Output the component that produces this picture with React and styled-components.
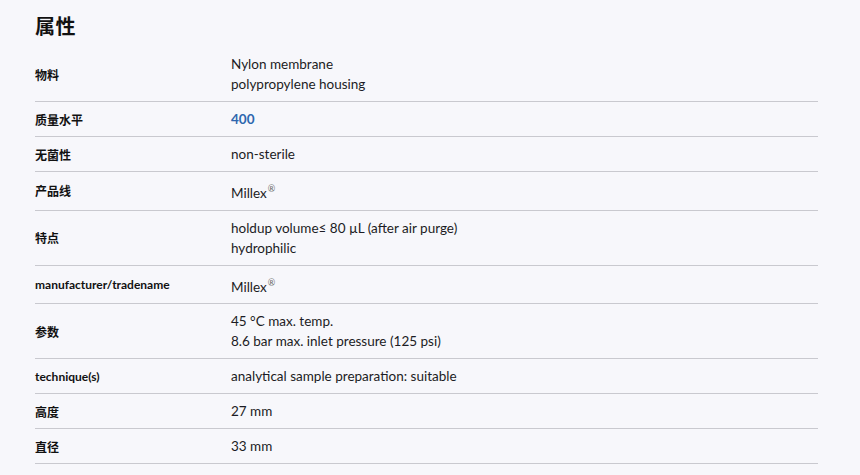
import React from "react";
import styled, { createGlobalStyle } from "styled-components";

const Global = createGlobalStyle`
  html, body { margin: 0; padding: 0; background: #f7f7fb; }
  body { font-family: Lato, "Noto Sans CJK SC", sans-serif; color: #1c1c24; }
`;

const Page = styled.div`
  padding: 12px 42px 0 35px;
`;

const Title = styled.h2`
  margin: 0 0 7px;
  font-family: "Noto Sans CJK SC", sans-serif;
  font-size: 20px;
  line-height: 28px;
  font-weight: 700;
  letter-spacing: 0.5px;
  color: #111;
`;

const Row = styled.div`
  display: grid;
  grid-template-columns: 196px 1fr;
  align-items: center;
  padding: 7px 0;
  border-bottom: 1px solid #c9c9cf;
`;

const Label = styled.div`
  font-family: Lato, "Noto Sans CJK SC", sans-serif;
  font-size: 12px;
  font-weight: 700;
  color: #111;
`;

const Value = styled.div`
  font-family: Lato, "Noto Sans CJK SC", sans-serif;
  font-size: 13.5px;
  line-height: 20px;
  color: ${(p) => (p.$link ? "#2d66ae" : "#1c1c24")};
  font-weight: ${(p) => (p.$link ? 700 : 400)};
`;

const Reg = styled.sup`
  font-size: 9px;
  color: #666;
  margin-left: 1px;
`;

const rows = [
  ["物料", ["Nylon membrane", "polypropylene housing"]],
  ["质量水平", ["400"], true],
  ["无菌性", ["non-sterile"]],
  ["产品线", ["Millex®"]],
  ["特点", ["holdup volume≤ 80 µL (after air purge)", "hydrophilic"]],
  ["manufacturer/tradename", ["Millex®"]],
  ["参数", ["45 °C max. temp.", "8.6 bar max. inlet pressure (125 psi)"]],
  ["technique(s)", ["analytical sample preparation: suitable"]],
  ["高度", ["27 mm"]],
  ["直径", ["33 mm"]],
];

function renderLine(t) {
  if (t.endsWith("®")) {
    return (
      <>
        {t.slice(0, -1)}
        <Reg>®</Reg>
      </>
    );
  }
  return t;
}

export default function App() {
  return (
    <>
      <Global />
      <Page>
        <Title>属性</Title>
        {rows.map(([label, lines, link]) => (
          <Row key={label}>
            <Label>{label}</Label>
            <Value $link={link}>
              {lines.map((l, i) => (
                <div key={i}>{renderLine(l)}</div>
              ))}
            </Value>
          </Row>
        ))}
      </Page>
    </>
  );
}
